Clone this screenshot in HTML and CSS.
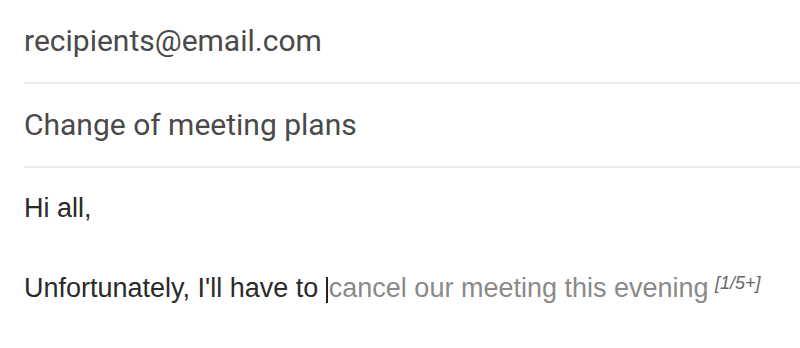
FILE: index.html
```html
<!DOCTYPE html>
<html lang="en">
<head>
<meta charset="utf-8">
<title>Compose</title>
<link rel="stylesheet" href="styles.css">
</head>
<body>
<div class="compose">
  <div class="field">recipients@email.com</div>
  <div class="field">Change of meeting plans</div>
  <div class="body">
    <div class="line">Hi all,</div>
    <div class="line"><br></div>
    <div class="line">Unfortunately, I'll have to <span class="caret"></span><span class="suggest">cancel our meeting this evening</span> <sup class="hint">[1/5+]</sup></div>
  </div>
</div>
</body>
</html>
```

FILE: styles.css
```css
html, body {
  margin: 0;
  padding: 0;
  background: #ffffff;
}

.compose {
  padding-left: 24px;
}

.field {
  font-family: Roboto, "Liberation Sans", sans-serif;
  font-size: 30px;
  line-height: 40px;
  color: #4a4a4a;
  padding: 21px 0 21px 0;
  border-bottom: 2px solid #eceff0;
  white-space: nowrap;
}

.body {
  padding-top: 20px;
  font-family: "Liberation Sans", Arial, sans-serif;
  font-size: 27px;
  line-height: 40px;
  color: #2a2a2a;
  white-space: nowrap;
}

.line {
  height: 40px;
}

.caret {
  display: inline-block;
  width: 2px;
  height: 26px;
  background: #222222;
  vertical-align: -6px;
  margin-right: 1px;
}

.suggest {
  color: #8a8a8a;
}

.hint {
  font-size: 18px;
  font-style: italic;
  color: #666666;
  line-height: 0;
  vertical-align: 8px;
  margin-left: -1px;
}
```
